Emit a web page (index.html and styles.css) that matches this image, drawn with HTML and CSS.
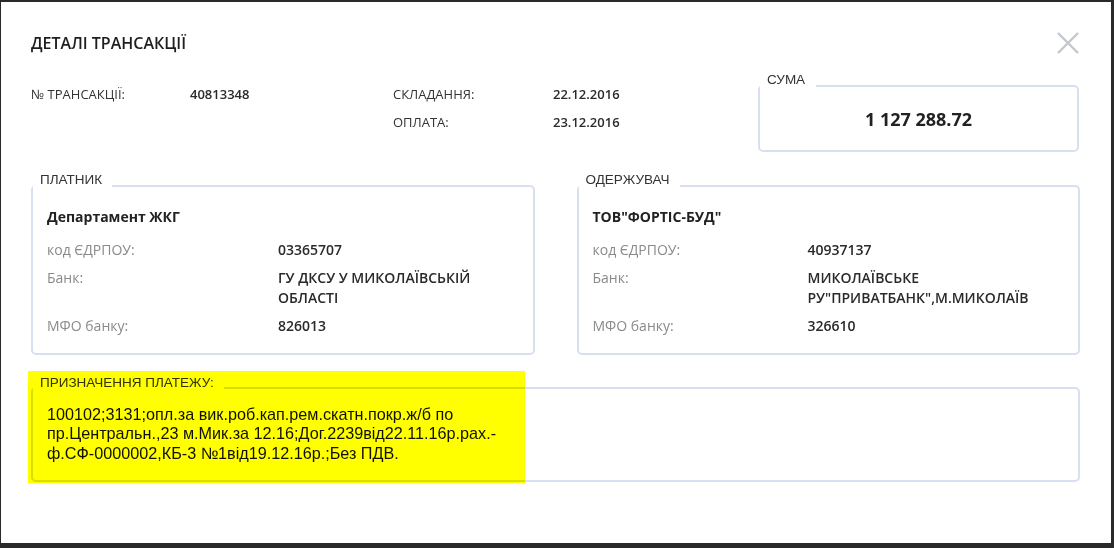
FILE: index.html
```html
<!DOCTYPE html>
<html lang="uk">
<head>
<meta charset="utf-8">
<title>Деталі трансакції</title>
<link rel="stylesheet" href="styles.css">
</head>
<body>
<div class="modal">
  <header class="modal-header">
    <h1 class="modal-title">ДЕТАЛІ ТРАНСАКЦІЇ</h1>
    <button class="close" type="button" aria-label="Закрити">
      <svg width="22" height="22" viewBox="0 0 22 22"><path d="M1 1L21 21M21 1L1 21" stroke="#c3c7ce" stroke-width="2.4" fill="none"/></svg>
    </button>
  </header>

  <section class="summary">
    <div class="info">
      <div class="info-label">№ ТРАНСАКЦІЇ:</div>
      <div class="info-value">40813348</div>
      <div class="info-label">СКЛАДАННЯ:</div>
      <div class="info-value">22.12.2016</div>
      <div class="info-label info-col3">ОПЛАТА:</div>
      <div class="info-value">23.12.2016</div>
    </div>
    <fieldset class="box box--sum">
      <legend class="box-legend">СУМА</legend>
      <div class="sum-value">1 127 288.72</div>
    </fieldset>
  </section>

  <section class="parties">
    <fieldset class="box">
      <legend class="box-legend">ПЛАТНИК</legend>
      <div class="party party--payer">
        <div class="party-name">Департамент ЖКГ</div>
        <div class="party-label">код ЄДРПОУ:</div>
        <div class="party-value">03365707</div>
        <div class="party-label">Банк:</div>
        <div class="party-value">ГУ ДКСУ У МИКОЛАЇВСЬКІЙ ОБЛАСТІ</div>
        <div class="party-label">МФО банку:</div>
        <div class="party-value">826013</div>
      </div>
    </fieldset>
    <fieldset class="box">
      <legend class="box-legend">ОДЕРЖУВАЧ</legend>
      <div class="party party--payee">
        <div class="party-name">ТОВ"ФОРТІС-БУД"</div>
        <div class="party-label">код ЄДРПОУ:</div>
        <div class="party-value">40937137</div>
        <div class="party-label">Банк:</div>
        <div class="party-value">МИКОЛАЇВСЬКЕ РУ"ПРИВАТБАНК",М.МИКОЛАЇВ</div>
        <div class="party-label">МФО банку:</div>
        <div class="party-value">326610</div>
      </div>
    </fieldset>
  </section>

  <fieldset class="box box--purpose">
    <legend class="box-legend">ПРИЗНАЧЕННЯ ПЛАТЕЖУ:</legend>
    <p class="purpose-text">100102;3131;опл.за вик.роб.кап.рем.скатн.покр.ж/б по пр.Центральн.,23 м.Мик.за 12.16;Дог.2239від22.11.16р.рах.-ф.СФ-0000002,КБ-3 №1від19.12.16р.;Без ПДВ.</p>
  </fieldset>

  <div class="highlight" aria-hidden="true"></div>
</div>
</body>
</html>
```

FILE: styles.css
```css
* { box-sizing: border-box; }

html, body {
  margin: 0;
  padding: 0;
}

body {
  width: 1114px;
  height: 548px;
  background: #2a2a2a;
  font-family: "Open Sans", "Liberation Sans", sans-serif;
  color: #333;
  overflow: hidden;
  padding: 2px 0 0 1px;
}

.modal {
  position: relative;
  width: 1110px;
  height: 541px;
  background: #fff;
  padding: 30px 31px 0 30px;
}

.modal-header {
  display: flex;
  align-items: center;
  justify-content: space-between;
  height: 22px;
  margin-bottom: 18px;
}

.modal-title {
  margin: 0;
  font-size: 16px;
  line-height: 22px;
  font-weight: 600;
  color: #1e1e1e;
}

.close {
  border: 0;
  background: none;
  padding: 0;
  margin: 0 1px 0 0;
  width: 22px;
  height: 22px;
  display: block;
}

.close svg { display: block; }

.summary {
  display: flex;
  align-items: flex-start;
  justify-content: space-between;
}

.info {
  display: grid;
  grid-template-columns: 159px 203px 160px auto;
  row-gap: 8px;
  padding-top: 12px;
  font-size: 13px;
  line-height: 20px;
}

.info-label { color: #333; }
.info-value { font-weight: 600; color: #2a2a2a; }
.info-col3 { grid-column: 3; }

.box {
  margin: 0;
  padding: 0;
  min-width: 0;
  border: 2px solid #d7dff0;
  border-radius: 5px;
}

.box-legend {
  padding: 0 10px 12px 7px;
  font-family: "Liberation Sans", Arial, sans-serif;
  font-size: 13.5px;
  line-height: 15px;
  color: #333;
}

.box--sum {
  width: 321px;
  margin-right: 1px;
}

.box--sum .box-legend {
  padding-left: 7px;
  padding-right: 11px;
}

.sum-value {
  padding: 8px 0 19px;
  text-align: center;
  font-size: 18px;
  line-height: 24px;
  font-weight: 700;
  color: #222;
}

.parties {
  display: grid;
  grid-template-columns: 1fr 1fr;
  column-gap: 42px;
  margin-top: 20px;
}

.party {
  display: grid;
  row-gap: 8px;
  padding: 7.5px 14px 17px;
  font-size: 14px;
  line-height: 20px;
}

.party--payer { grid-template-columns: 231px 1fr; }
.party--payee { grid-template-columns: 215px 1fr; }

.party-name {
  grid-column: 1 / -1;
  font-size: 14px;
  font-weight: 700;
  color: #222;
  margin-bottom: 5px;
}

.party-label { color: #8a8a8a; }
.party-value { font-weight: 600; color: #2a2a2a; }

.box--purpose {
  margin-top: 20px;
}

.purpose-text {
  margin: 0;
  padding: 3px 14px 17px;
  width: 498px;
  font-family: "Liberation Sans", Arial, sans-serif;
  font-size: 16.2px;
  line-height: 19.5px;
  color: #111;
}

.highlight {
  position: absolute;
  left: 27px;
  top: 369px;
  width: 497px;
  height: 112px;
  background: #ffff00;
  mix-blend-mode: multiply;
  pointer-events: none;
}
```
